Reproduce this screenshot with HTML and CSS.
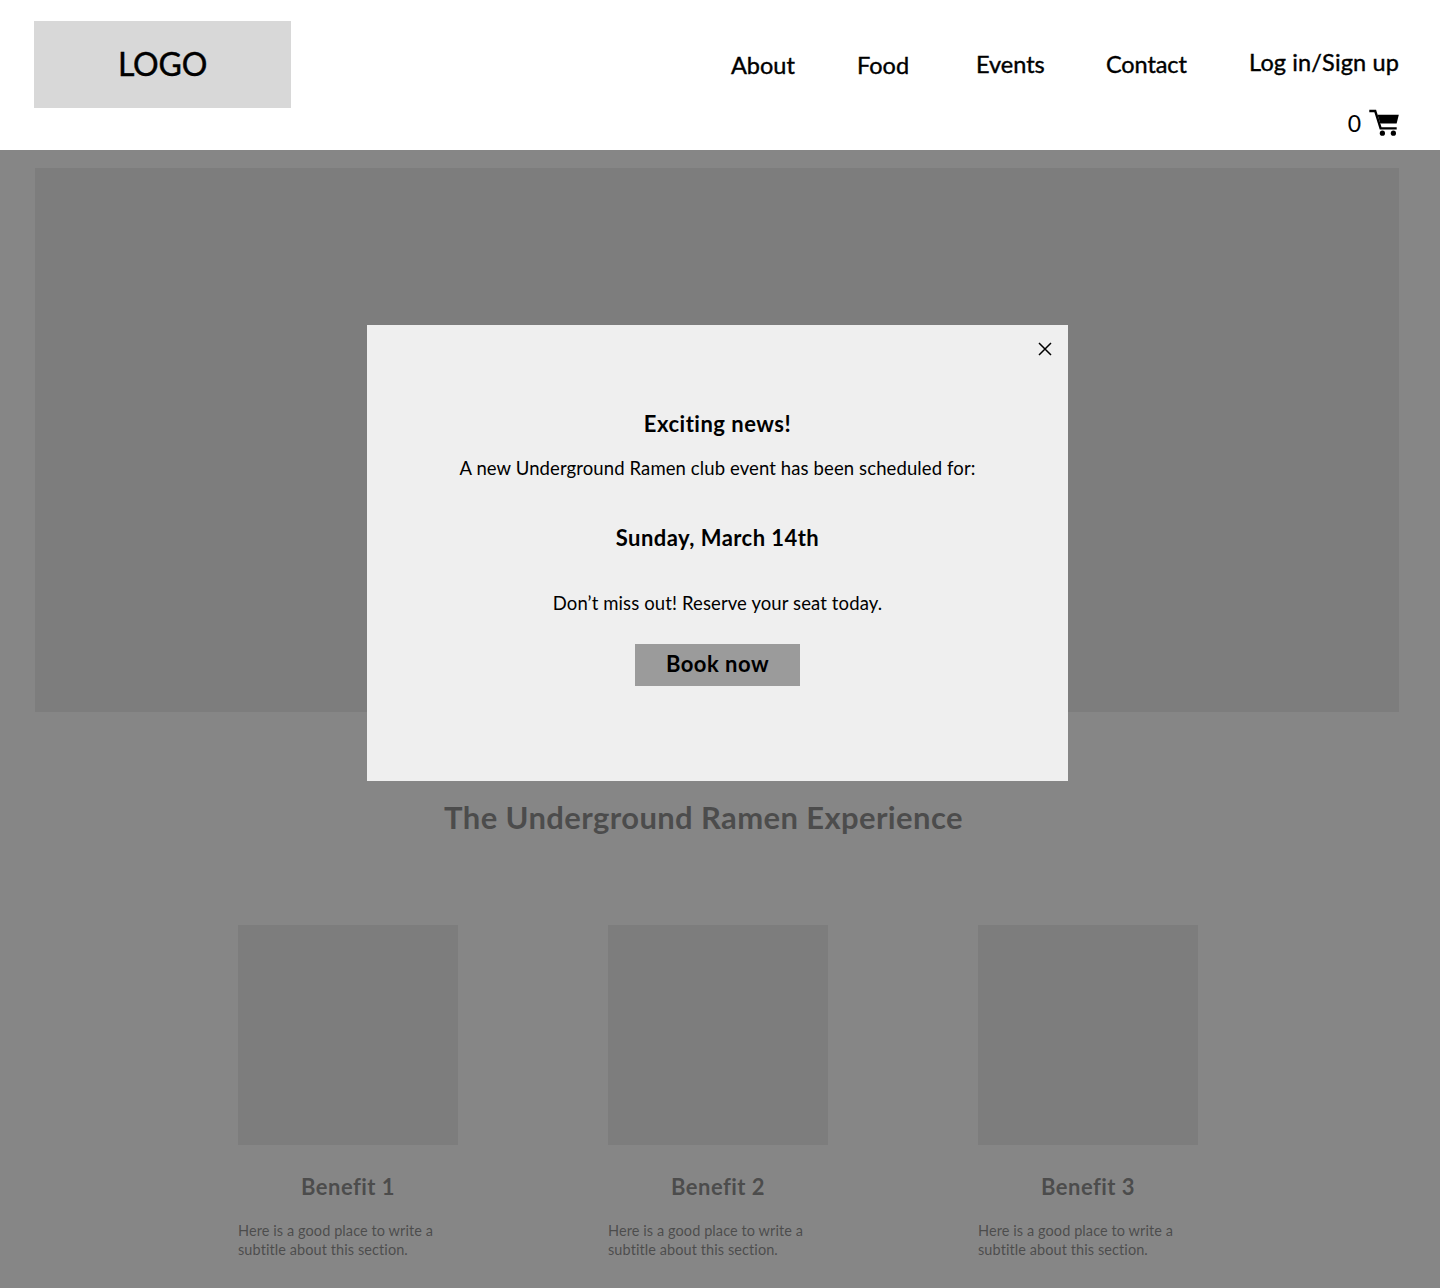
FILE: index.html
```html
<!DOCTYPE html>
<html lang="en">
<head>
<meta charset="utf-8">
<title>Underground Ramen</title>
<link rel="stylesheet" href="styles.css">
</head>
<body>
<header class="site-header">
  <div class="logo">LOGO</div>
  <nav class="nav">
    <a class="nav-link nav-about">About</a>
    <a class="nav-link nav-food">Food</a>
    <a class="nav-link nav-events">Events</a>
    <a class="nav-link nav-contact">Contact</a>
  </nav>
  <div class="account">
    <a class="nav-link login">Log in/Sign up</a>
    <div class="cart">
      <span class="cart-count">0</span>
      <svg class="cart-icon" viewBox="0 0 30 28" width="30" height="28" aria-hidden="true">
        <path d="M0.3 2H6.2L11.6 19.4H27.7" fill="none" stroke="#000" stroke-width="2.4"/>
        <path d="M8.5 5.7H29.8L27.6 14.6H11.3Z" fill="#000"/>
        <circle cx="13.4" cy="24.2" r="2.6" fill="#000"/>
        <circle cx="24.4" cy="24.2" r="2.6" fill="#000"/>
      </svg>
    </div>
  </div>
</header>
<main class="page">
  <div class="hero"></div>
  <h2 class="section-title">The Underground Ramen Experience</h2>
  <section class="benefits">
    <article class="benefit">
      <div class="benefit-image"></div>
      <h3 class="benefit-title">Benefit 1</h3>
      <p class="benefit-text">Here is a good place to write a subtitle about this section.</p>
    </article>
    <article class="benefit">
      <div class="benefit-image"></div>
      <h3 class="benefit-title">Benefit 2</h3>
      <p class="benefit-text">Here is a good place to write a subtitle about this section.</p>
    </article>
    <article class="benefit">
      <div class="benefit-image"></div>
      <h3 class="benefit-title">Benefit 3</h3>
      <p class="benefit-text">Here is a good place to write a subtitle about this section.</p>
    </article>
  </section>
</main>
<div class="overlay">
  <div class="modal">
    <button class="close" aria-label="Close">
      <svg viewBox="0 0 14 14" width="14" height="14" aria-hidden="true">
        <path d="M1 1L13 13M13 1L1 13" fill="none" stroke="#000" stroke-width="1.5"/>
      </svg>
    </button>
    <h2 class="modal-title">Exciting news!</h2>
    <p class="modal-text modal-intro">A new Underground Ramen club event has been scheduled for:</p>
    <p class="modal-date">Sunday, March 14th</p>
    <p class="modal-text modal-cta">Don’t miss out! Reserve your seat today.</p>
    <a class="book">Book now</a>
  </div>
</div>
</body>
</html>
```
FILE: styles.css
```css
* { box-sizing: border-box; }
html, body { margin: 0; padding: 0; }
body {
  position: relative;
  height: 1288px;
  overflow: hidden;
  background: #fff;
  color: #000;
  font-family: "Lato", "Noto Sans", sans-serif;
  font-variant-ligatures: none;
}
.site-header {
  height: 150px;
  display: flex;
  align-items: flex-start;
  padding: 21px 41px 0 34px;
}
.logo {
  width: 257px;
  height: 87px;
  background: #d8d8d8;
  display: flex;
  align-items: center;
  justify-content: center;
  padding-bottom: 2px;
  font-size: 32px;
  letter-spacing: -0.2px;
  -webkit-text-stroke: 0.45px #000;
}
.nav {
  display: flex;
  margin-left: 440px;
  padding-top: 29px;
}
.nav-link {
  font-size: 23.5px;
  line-height: 30px;
  white-space: nowrap;
  -webkit-text-stroke: 0.4px #000;
}
.nav-about { width: 126px; }
.nav-food { width: 119px; }
.nav-events { width: 130px; margin-top: -1px; }
.nav-contact { margin-top: -1px; letter-spacing: -0.1px; }
.login { letter-spacing: 0.14px; }
.account {
  margin-left: auto;
  display: flex;
  flex-direction: column;
  align-items: flex-end;
  padding-top: 26px;
}
.cart {
  display: flex;
  align-items: center;
  gap: 8px;
  margin-top: 32px;
}
.cart-count { font-size: 23px; line-height: 28px; }
.cart-icon { display: block; }
.page { padding: 18px 0 0 35px; }
.hero {
  width: 1364px;
  height: 544px;
  background: #d8d8d8;
}
.section-title {
  width: 1337px;
  margin: 86px 0 0;
  text-align: center;
  font-size: 31px;
  line-height: 38px;
  letter-spacing: 0.38px;
  font-weight: 700;
}
.benefits {
  display: flex;
  gap: 150px;
  margin: 89px 0 0 203px;
}
.benefit { width: 220px; }
.benefit-image { height: 220px; background: #d8d8d8; }
.benefit-title {
  margin: 28px 0 0;
  text-align: center;
  font-size: 22px;
  line-height: 28px;
  letter-spacing: 0.45px;
  font-weight: 700;
}
.benefit-text {
  margin: 20px 0 0;
  font-size: 14.5px;
  line-height: 19px;
  letter-spacing: 0.08px;
}
.overlay {
  position: absolute;
  top: 150px;
  left: 0;
  right: 0;
  bottom: 0;
  background: rgba(98, 98, 98, 0.773);
  padding: 175px 0 0 367px;
}
.modal {
  position: relative;
  width: 701px;
  height: 456px;
  background: #efefef;
  display: flex;
  flex-direction: column;
  align-items: center;
  padding-top: 84px;
  text-align: center;
}
.close {
  position: absolute;
  top: 17px;
  right: 16px;
  padding: 0;
  border: 0;
  background: none;
  line-height: 0;
}
.modal-title {
  margin: 0;
  font-size: 22px;
  line-height: 30px;
  letter-spacing: 0.5px;
  font-weight: 700;
}
.modal-text {
  margin: 0;
  font-size: 18.5px;
  line-height: 24px;
  letter-spacing: 0.11px;
}
.modal-intro { margin-top: 17px; }
.modal-date {
  margin: 43px 0 0;
  font-size: 22px;
  line-height: 30px;
  letter-spacing: 0.45px;
  font-weight: 700;
}
.modal-cta { margin-top: 38px; }
.book {
  margin-top: 29px;
  width: 165px;
  height: 42px;
  background: #9b9b9b;
  display: flex;
  align-items: center;
  justify-content: center;
  padding-bottom: 3px;
  font-size: 22px;
  letter-spacing: 0.5px;
  font-weight: 700;
}
```
